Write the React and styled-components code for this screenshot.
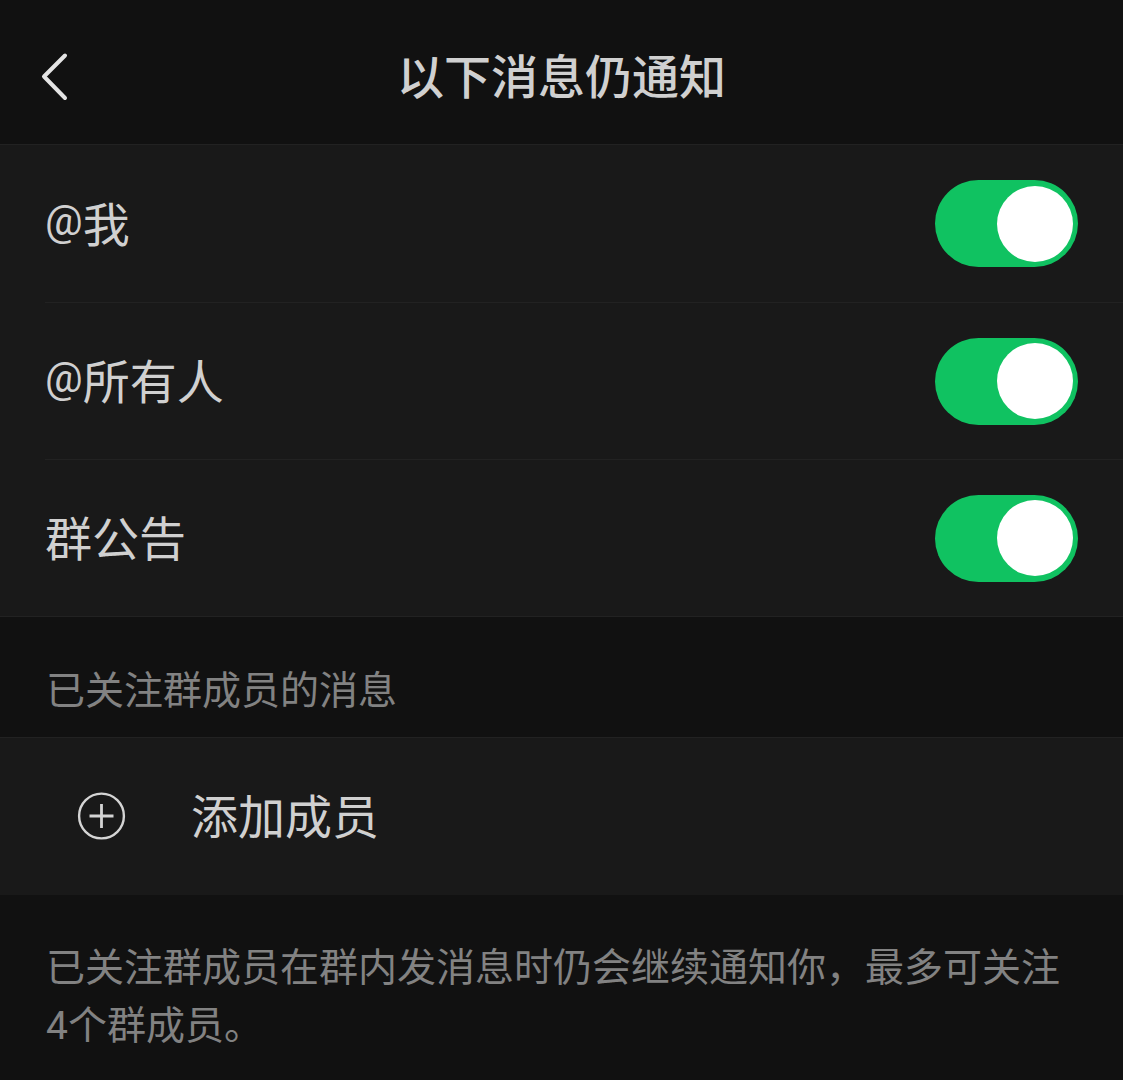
import React, { useState } from 'react'
import styled, { createGlobalStyle } from 'styled-components';

function SwitchRow({id, mention, label}) {
    const [on, setOn] = useState(true);

    return (
        <Row>
            <RowBody>
                <RowLabel htmlFor={id}>
                    {mention && <AtSign>@</AtSign>}
                    {label}
                </RowLabel>
                <Switch
                    id={id}
                    type="checkbox"
                    role="switch"
                    checked={on}
                    onChange={() => setOn(!on)}
                />
            </RowBody>
        </Row>
    )
}

function App() {
    return (
        <Page>
            <GlobalStyle />
            <Header>
                <BackButton type="button" aria-label="返回">
                    <svg width="28" height="50" viewBox="0 0 28 50" fill="none" stroke="#e4e4e4" strokeWidth="4" strokeLinecap="round" strokeLinejoin="round">
                        <path d="M25 3.5 L4 24.5 L25 46" />
                    </svg>
                </BackButton>
                <Title>以下消息仍通知</Title>
            </Header>

            <Group>
                <SwitchRow id="at-me" mention label="我" />
                <SwitchRow id="at-all" mention label="所有人" />
                <SwitchRow id="notice" label="群公告" />
            </Group>

            <SectionTitle>已关注群成员的消息</SectionTitle>

            <Group $last>
                <AddButton type="button">
                    <svg width="50" height="50" viewBox="0 0 50 50" fill="none" stroke="#d4d4d4" strokeWidth="2.4">
                        <circle cx="24.5" cy="25" r="22.4" />
                        <path d="M24.5 13 V37 M12.5 25 H36.5" strokeWidth="2.8" />
                    </svg>
                    <span>添加成员</span>
                </AddButton>
            </Group>

            <Hint>已关注群成员在群内发消息时仍会继续通知你，最多可关注4个群成员。</Hint>
        </Page>
    )
}

export default App;

const GlobalStyle = createGlobalStyle`
    * {
        box-sizing: border-box;
    }

    body {
        margin: 0;
        background: #111;
    }
`;

const Page = styled.main`
    min-height: 100vh;
    background: #111;
    color: #d0d0d0;
    font-family: Roboto, "Noto Sans CJK SC", sans-serif;
`;

const Header = styled.header`
    display: grid;
    grid-template-columns: 72px 1fr 72px;
    align-items: center;
    height: 144px;
    padding-top: 8px;
`;

const BackButton = styled.button`
    display: flex;
    justify-content: flex-end;
    padding: 2px 4px 0 0;
    border: 0;
    background: none;
    cursor: pointer;
`;

const Title = styled.h1`
    margin: 0;
    padding-top: 4px;
    font-size: 47px;
    font-weight: 500;
    line-height: 64px;
    text-align: center;
`;

const Group = styled.section`
    border-top: 1px solid #222;
    border-bottom: 1px solid ${props => props.$last ? '#191919' : '#222'};
    background: #191919;
`;

const Row = styled.div`
    padding-left: 45px;
`;

const RowBody = styled.div`
    display: flex;
    align-items: center;
    justify-content: space-between;
    height: 157px;
    padding-right: 45px;

    ${Row} + ${Row} & {
        border-top: 1px solid #222;
    }
`;

const RowLabel = styled.label`
    display: flex;
    padding-top: 4px;
    font-size: 47px;
    line-height: 64px;
`;

const AtSign = styled.span`
    font-size: 42px;
    line-height: 54px;
`;

const Switch = styled.input`
    appearance: none;
    display: flex;
    align-items: center;
    width: 143px;
    height: 87px;
    margin: 0;
    padding: 0 5px;
    border-radius: 44px;
    background: ${props => props.checked ? '#10c261' : '#3a3a3a'};
    cursor: pointer;

    &::before {
        content: '';
        width: 76px;
        height: 76px;
        margin-left: ${props => props.checked ? 'auto' : '0'};
        border-radius: 50%;
        background: #fff;
    }
`;

const SectionTitle = styled.h2`
    margin: 0;
    padding: 46px 46px 18px;
    font-size: 39px;
    font-weight: 400;
    line-height: 56px;
    color: #828282;
`;

const AddButton = styled.button`
    display: flex;
    align-items: center;
    gap: 64px;
    width: 100%;
    height: 156px;
    padding: 0 77px;
    border: 0;
    background: none;
    color: inherit;
    font-family: inherit;
    font-size: 47px;
    line-height: 64px;
    cursor: pointer;

    span {
        padding-top: 4px;
    }
`;

const Hint = styled.p`
    margin: 0;
    padding: 44px 46px 18px;
    font-size: 39px;
    line-height: 58px;
    color: #828282;
`;
